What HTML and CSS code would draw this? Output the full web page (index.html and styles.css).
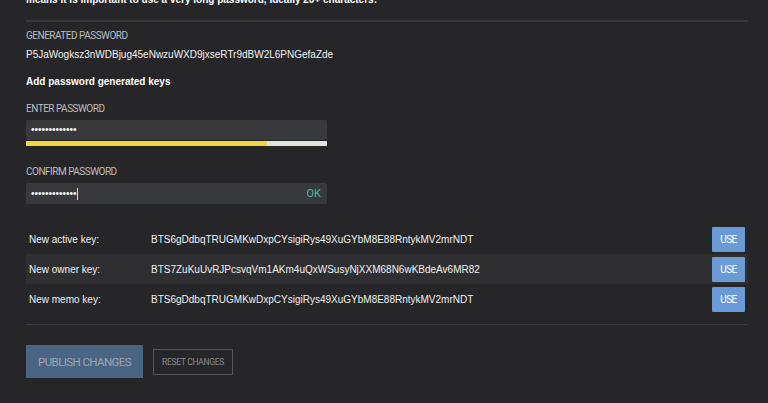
FILE: index.html
```html
<!DOCTYPE html>
<html>
<head>
<meta charset="utf-8">
<link rel="stylesheet" href="styles.css">
</head>
<body>
<div class="page">
  <p class="intro">means it is important to use a very long password, ideally 20+ characters:</p>
  <hr class="rule">
  <div class="label label-gen">GENERATED PASSWORD</div>
  <div class="genpass">P5JaWogksz3nWDBjug45eNwzuWXD9jxseRTr9dBW2L6PNGefaZde</div>
  <h4 class="subhead">Add password generated keys</h4>
  <div class="label label-enter">ENTER PASSWORD</div>
  <div class="field">
    <div class="input"><span class="dots">•••••••••••••</span></div>
    <div class="strength"><div class="strength-fill" style="width:80%"></div></div>
  </div>
  <div class="label label-confirm">CONFIRM PASSWORD</div>
  <div class="input confirm"><span class="dots">•••••••••••••<span class="caret"></span></span><span class="ok">OK</span></div>
  <div class="keys">
    <div class="key-row">
      <span class="key-name">New active key:</span>
      <span class="key-value">BTS6gDdbqTRUGMKwDxpCYsigiRys49XuGYbM8E88RntykMV2mrNDT</span>
      <button class="use">USE</button>
    </div>
    <div class="key-row alt">
      <span class="key-name">New owner key:</span>
      <span class="key-value">BTS7ZuKuUvRJPcsvqVm1AKm4uQxWSusyNjXXM68N6wKBdeAv6MR82</span>
      <button class="use">USE</button>
    </div>
    <div class="key-row">
      <span class="key-name">New memo key:</span>
      <span class="key-value">BTS6gDdbqTRUGMKwDxpCYsigiRys49XuGYbM8E88RntykMV2mrNDT</span>
      <button class="use">USE</button>
    </div>
  </div>
  <hr class="rule rule-bottom">
  <div class="actions">
    <button class="publish">PUBLISH CHANGES</button>
    <button class="reset">RESET CHANGES</button>
  </div>
</div>
</body>
</html>
```
FILE: styles.css
```css
html, body {
  margin: 0;
  padding: 0;
  background: #262628;
  height: 100%;
  overflow: hidden;
}
body {
  font-family: "Liberation Sans", Arial, sans-serif;
  color: #fff;
}
.page {
  padding: 0 20px 0 26px;
}
.intro {
  margin: -6px 0 0;
  font-size: 10px;
  font-weight: bold;
  line-height: 12px;
  color: #fff;
}
.rule {
  border: 0;
  height: 2px;
  background: #38383b;
  margin: 14px 0 0;
}
.label {
  font-family: Roboto, "Liberation Sans", sans-serif;
  font-size: 10px;
  letter-spacing: -0.5px;
  color: #bdbdbf;
  line-height: 12px;
}
.label-gen { margin-top: 8px; }
.genpass {
  font-size: 10px;
  line-height: 12px;
  margin-top: 7px;
  color: #f2f2f2;
}
.subhead {
  margin: 15px 0 0;
  font-size: 10px;
  font-weight: bold;
  line-height: 12px;
}
.label-enter { margin-top: 15px; }
.field { margin-top: 5px; width: 301px; }
.input {
  width: 301px;
  height: 20px;
  background: #38393d;
  border-radius: 2px;
  display: flex;
  align-items: center;
  justify-content: space-between;
  padding: 0 6px 0 5px;
  box-sizing: border-box;
}
.field .input { border-radius: 2px 2px 0 0; }
.confirm { height: 21px; margin-top: 5px; }
.dots {
  font-size: 10px;
  line-height: 12px;
  color: #fff;
  display: flex;
  align-items: center;
}
.caret {
  display: inline-block;
  width: 1px;
  height: 12px;
  background: #ddd;
}
.strength {
  height: 5px;
  margin-top: 1px;
  background: #e2e2dc;
}
.strength-fill {
  height: 100%;
  background: #f1d83c;
}
.label-confirm { margin-top: 20px; }
.ok {
  font-family: Roboto, "Liberation Sans", sans-serif;
  font-size: 11px;
  color: #3fbf94;
}
.keys { margin-top: 20px; }
.key-row {
  display: flex;
  align-items: center;
  height: 30px;
  padding: 0 3px;
  font-size: 10px;
  color: #f0f0f0;
}
.key-row.alt { background: #2f2f32; }
.key-name { width: 122px; }
.key-value { flex: 1; }
.use {
  width: 33px;
  height: 25px;
  border: 0;
  background: #6a9bd6;
  color: #fff;
  font-family: Roboto, "Liberation Sans", sans-serif;
  font-size: 10px;
  letter-spacing: -0.5px;
  padding: 0;
  border-radius: 1px;
}
.rule-bottom { margin-top: 10px; height: 1px; background: #3a3a3d; }
.actions {
  display: flex;
  align-items: center;
  gap: 10px;
  margin-top: 20px;
}
.publish {
  width: 117px;
  height: 33px;
  border: 0;
  background: #4a6584;
  color: #9ba4b0;
  font-family: Roboto, "Liberation Sans", sans-serif;
  font-size: 11.5px;
  letter-spacing: -0.6px;
  padding: 0;
}
.reset {
  width: 80px;
  height: 26px;
  border: 1px solid #555557;
  background: transparent;
  color: #8a8a8c;
  font-family: Roboto, "Liberation Sans", sans-serif;
  font-size: 8.5px;
  letter-spacing: -0.3px;
  padding: 0;
}
```
